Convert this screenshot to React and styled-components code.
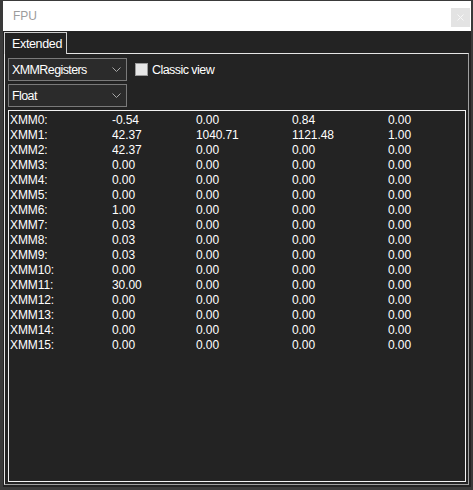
import React from "react";
import styled, { createGlobalStyle } from "styled-components";

const GlobalStyle = createGlobalStyle`
  html, body {
    margin: 0;
    padding: 0;
    background: #3a3a3a;
  }
  body {
    font-family: "Liberation Sans", Arial, sans-serif;
    font-size: 12px;
  }
`;

const Page = styled.div`
  width: 473px;
  height: 490px;
  padding: 1px 0 0 3px;
  box-sizing: border-box;
  overflow: hidden;
`;

const Window = styled.div`
  width: 468px;
  height: 486px;
  display: flex;
  flex-direction: column;
  background: #232323;
`;

const TitleBar = styled.div`
  height: 30px;
  flex: none;
  background: #ffffff;
  display: flex;
  align-items: center;
  justify-content: space-between;
  padding-left: 10px;
  box-sizing: border-box;
`;

const Title = styled.span`
  color: #9c9c9c;
  font-size: 12px;
`;

const CloseButton = styled.div`
  width: 19px;
  height: 19px;
  margin-right: 1px;
  margin-top: 3px;
  background: #e3e3e3;
  display: flex;
  align-items: center;
  justify-content: center;
`;

const Body = styled.div`
  flex: 1;
  display: flex;
  flex-direction: column;
  padding: 1px 2px 2px 1px;
  min-height: 0;
`;

const TabStrip = styled.div`
  display: flex;
  height: 21px;
  flex: none;
`;

const Tab = styled.div`
  width: 63px;
  height: 22px;
  border: 1px solid #cfcfcf;
  border-bottom: none;
  color: #ffffff;
  padding-left: 7px;
  box-sizing: border-box;
  display: flex;
  align-items: center;
  font-size: 12.5px;
  letter-spacing: -0.35px;
  position: relative;
  z-index: 1;
  background: #232323;
`;

const Panel = styled.div`
  flex: 1;
  display: flex;
  flex-direction: column;
  gap: 3px;
  border: 1px solid;
  border-color: #e6e6e6 #a0a0a0 #a0a0a0 #e6e6e6;
  padding: 4px 2px 2px 3px;
  min-height: 0;
`;

const ControlRow = styled.div`
  display: flex;
  align-items: center;
  gap: 8px;
`;

const Select = styled.div`
  width: 119px;
  height: 23px;
  box-sizing: border-box;
  border: 1px solid #7a7a7a;
  background: #2b2b2b;
  color: #ffffff;
  display: flex;
  align-items: center;
  justify-content: space-between;
  padding: 0 5px 0 3px;
  font-size: 12.5px;
  letter-spacing: -0.6px;
`;

const CheckLabel = styled.label`
  display: flex;
  align-items: center;
  gap: 4px;
  color: #ffffff;
  font-size: 12.5px;
  letter-spacing: -0.55px;
`;

const Box = styled.span`
  width: 13px;
  height: 13px;
  box-sizing: border-box;
  border: 1px solid #9a9a9a;
  background: #e6e6e6;
`;

const Registers = styled.div`
  flex: 1;
  border: 1px solid #f2f2f2;
  padding: 2px 0 0 1px;
  min-height: 0;
`;

const Row = styled.div`
  display: grid;
  grid-template-columns: 102px 84px 96px 96px 1fr;
  height: 15px;
  line-height: 15px;
  color: #ffffff;
  font-size: 12px;
  letter-spacing: -0.1px;
`;

const Chevron = () => (
  <svg width="9" height="5" viewBox="0 0 9 5">
    <path d="M0.5 0.5 L4.5 4.5 L8.5 0.5" fill="none" stroke="#a8a8a8" strokeWidth="1" />
  </svg>
);

const registers = [
  ["XMM0:", "-0.54", "0.00", "0.84", "0.00"],
  ["XMM1:", "42.37", "1040.71", "1121.48", "1.00"],
  ["XMM2:", "42.37", "0.00", "0.00", "0.00"],
  ["XMM3:", "0.00", "0.00", "0.00", "0.00"],
  ["XMM4:", "0.00", "0.00", "0.00", "0.00"],
  ["XMM5:", "0.00", "0.00", "0.00", "0.00"],
  ["XMM6:", "1.00", "0.00", "0.00", "0.00"],
  ["XMM7:", "0.03", "0.00", "0.00", "0.00"],
  ["XMM8:", "0.03", "0.00", "0.00", "0.00"],
  ["XMM9:", "0.03", "0.00", "0.00", "0.00"],
  ["XMM10:", "0.00", "0.00", "0.00", "0.00"],
  ["XMM11:", "30.00", "0.00", "0.00", "0.00"],
  ["XMM12:", "0.00", "0.00", "0.00", "0.00"],
  ["XMM13:", "0.00", "0.00", "0.00", "0.00"],
  ["XMM14:", "0.00", "0.00", "0.00", "0.00"],
  ["XMM15:", "0.00", "0.00", "0.00", "0.00"],
];

export default function App() {
  return (
    <>
      <GlobalStyle />
      <Page>
        <Window>
          <TitleBar>
            <Title>FPU</Title>
            <CloseButton>
              <svg width="7" height="7" viewBox="0 0 7 7">
                <path d="M0.5 0.5 L6.5 6.5 M6.5 0.5 L0.5 6.5" stroke="#f7f7f7" strokeWidth="1" />
              </svg>
            </CloseButton>
          </TitleBar>
          <Body>
            <TabStrip>
              <Tab>Extended</Tab>
            </TabStrip>
            <Panel>
              <ControlRow>
                <Select>
                  XMMRegisters
                  <Chevron />
                </Select>
                <CheckLabel>
                  <Box />
                  Classic view
                </CheckLabel>
              </ControlRow>
              <ControlRow>
                <Select>
                  Float
                  <Chevron />
                </Select>
              </ControlRow>
              <Registers>
                {registers.map((r) => (
                  <Row key={r[0]}>
                    {r.map((c, i) => (
                      <span key={i}>{c}</span>
                    ))}
                  </Row>
                ))}
              </Registers>
            </Panel>
          </Body>
        </Window>
      </Page>
    </>
  );
}
